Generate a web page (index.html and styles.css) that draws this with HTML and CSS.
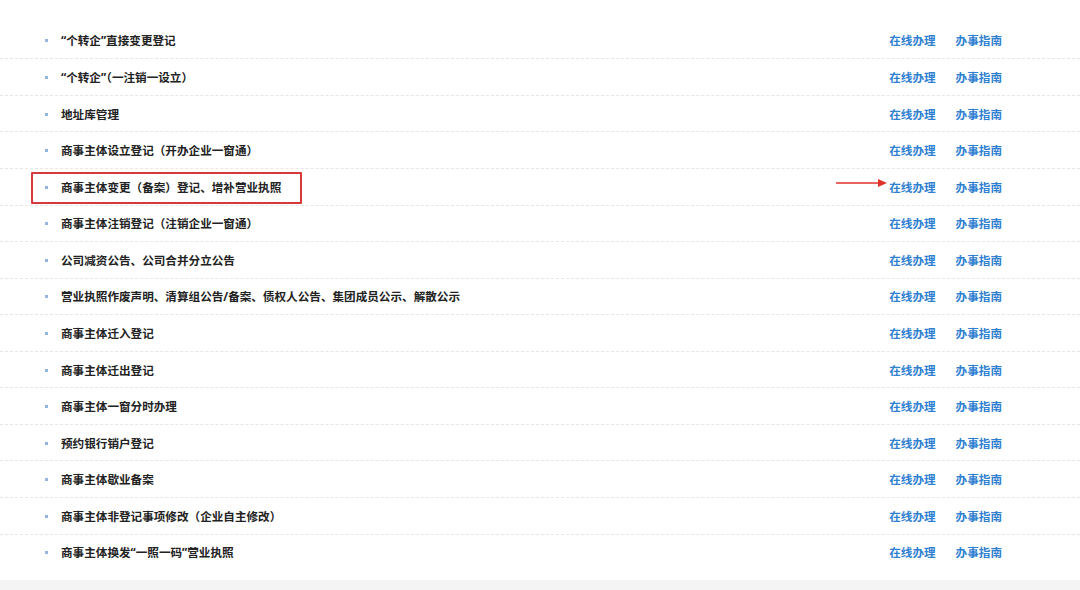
FILE: index.html
```html
<!DOCTYPE html>
<html lang="zh-CN">
<head>
    <meta charset="UTF-8">
    <meta name="viewport" content="width=device-width, initial-scale=1.0">
    <title>商事主体登记</title>
    <link rel="stylesheet" href="styles.css">
</head>
<body>

<div class="page">
    <ul class="service-list">
        <li class="item">
            <span class="name">“个转企”直接变更登记</span>
            <span class="links"><a href="#">在线办理</a><a href="#">办事指南</a></span>
        </li>
        <li class="item">
            <span class="name">“个转企”（一注销一设立）</span>
            <span class="links"><a href="#">在线办理</a><a href="#">办事指南</a></span>
        </li>
        <li class="item">
            <span class="name">地址库管理</span>
            <span class="links"><a href="#">在线办理</a><a href="#">办事指南</a></span>
        </li>
        <li class="item">
            <span class="name">商事主体设立登记（开办企业一窗通）</span>
            <span class="links"><a href="#">在线办理</a><a href="#">办事指南</a></span>
        </li>
        <li class="item marked">
            <span class="name">商事主体变更（备案）登记、增补营业执照</span>
            <span class="links"><a href="#">在线办理</a><a href="#">办事指南</a></span>
            <span class="mark-box"></span>
            <svg class="arrow" width="52" height="10" viewBox="0 0 52 10">
                <line x1="0" y1="5" x2="44" y2="5" stroke="#e0312b" stroke-width="1.5"/>
                <polygon points="42,1 51,5 42,9" fill="#e0312b"/>
            </svg>
        </li>
        <li class="item">
            <span class="name">商事主体注销登记（注销企业一窗通）</span>
            <span class="links"><a href="#">在线办理</a><a href="#">办事指南</a></span>
        </li>
        <li class="item">
            <span class="name">公司减资公告、公司合并分立公告</span>
            <span class="links"><a href="#">在线办理</a><a href="#">办事指南</a></span>
        </li>
        <li class="item">
            <span class="name">营业执照作废声明、清算组公告/备案、债权人公告、集团成员公示、解散公示</span>
            <span class="links"><a href="#">在线办理</a><a href="#">办事指南</a></span>
        </li>
        <li class="item">
            <span class="name">商事主体迁入登记</span>
            <span class="links"><a href="#">在线办理</a><a href="#">办事指南</a></span>
        </li>
        <li class="item">
            <span class="name">商事主体迁出登记</span>
            <span class="links"><a href="#">在线办理</a><a href="#">办事指南</a></span>
        </li>
        <li class="item">
            <span class="name">商事主体一窗分时办理</span>
            <span class="links"><a href="#">在线办理</a><a href="#">办事指南</a></span>
        </li>
        <li class="item">
            <span class="name">预约银行销户登记</span>
            <span class="links"><a href="#">在线办理</a><a href="#">办事指南</a></span>
        </li>
        <li class="item">
            <span class="name">商事主体歇业备案</span>
            <span class="links"><a href="#">在线办理</a><a href="#">办事指南</a></span>
        </li>
        <li class="item">
            <span class="name">商事主体非登记事项修改（企业自主修改）</span>
            <span class="links"><a href="#">在线办理</a><a href="#">办事指南</a></span>
        </li>
        <li class="item">
            <span class="name">商事主体换发“一照一码”营业执照</span>
            <span class="links"><a href="#">在线办理</a><a href="#">办事指南</a></span>
        </li>
    </ul>
    <div class="footer-band"></div>
</div>

</body>
</html>
```

FILE: styles.css
```css
body {
    margin: 0;
    background: #fff;
    font-family: "Noto Sans", "Noto Sans CJK SC", sans-serif;
}
.page {
    width: 1080px;
    height: 590px;
    overflow: hidden;
}
.service-list {
    list-style: none;
    margin: 0;
    padding: 22.7px 0 0;
}
.item {
    position: relative;
    display: flex;
    align-items: center;
    justify-content: space-between;
    height: 35.57px;
    padding: 0 78px 0 45px;
    border-bottom: 1px dashed #e6e6e6;
}
.item:last-child {
    border-bottom: none;
}
.name {
    position: relative;
    padding-left: 16px;
    font-size: 11.6px;
    font-weight: bold;
    color: #222;
}
.name::before {
    content: "";
    position: absolute;
    left: 0;
    top: 50%;
    width: 3px;
    height: 3px;
    margin-top: -1px;
    background: #94b6dc;
}
.links {
    display: flex;
    gap: 20px;
}
.links a {
    font-size: 11.6px;
    font-weight: bold;
    color: #2f80d1;
    text-decoration: none;
}
.mark-box {
    position: absolute;
    left: 31px;
    top: 3px;
    width: 267px;
    height: 28px;
    border: 2px solid #d7393a;
    border-radius: 1px;
}
.arrow {
    position: absolute;
    left: 836px;
    top: 9px;
}
.footer-band {
    margin-top: 10px;
    height: 10px;
    background: #f4f4f4;
}
```
